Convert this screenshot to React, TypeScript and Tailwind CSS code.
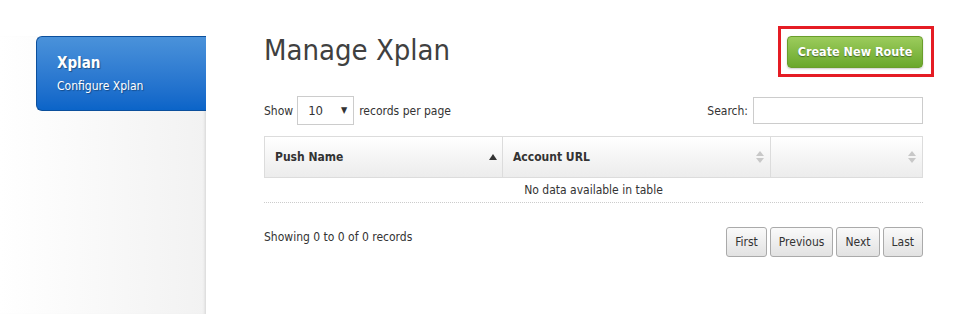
import React from "react";

const font = { fontFamily: '"DejaVu Sans Condensed", "Noto Sans", sans-serif' };

function SortBoth() {
  return (
    <svg width="8" height="12" viewBox="0 0 8 12" className="block">
      <path d="M4 0 L8 5 L0 5 Z" fill="#c8c8c8" />
      <path d="M4 12 L8 7 L0 7 Z" fill="#c8c8c8" />
    </svg>
  );
}

function SortAsc() {
  return (
    <svg width="8" height="6" viewBox="0 0 8 6" className="block">
      <path d="M4 0 L8 6 L0 6 Z" fill="#333" />
    </svg>
  );
}

export default function App() {
  return (
    <div className="flex h-[314px] w-[980px] bg-white text-[12px] text-[#333]" style={font}>
      <aside className="flex w-[206px] flex-col">
        <div className="h-[36px] bg-white" />
        <div className="flex-1 bg-gradient-to-r from-white to-[#f2f2f2] shadow-[inset_-3px_0_3px_-2px_rgba(0,0,0,0.12)]">
          <div className="ml-[36px] h-[75px] rounded-l-[6px] border border-r-0 border-[#0b4f9c] bg-gradient-to-b from-[#4a92da] to-[#0a64c8] pl-[20px] pt-[15px] text-white">
            <div className="text-[15px] font-bold leading-[22px] [text-shadow:1px_1px_1px_rgba(0,0,0,0.35)]">Xplan</div>
            <div className="mt-[4px] text-[12px] leading-[16px] [text-shadow:1px_1px_1px_rgba(0,0,0,0.35)]">Configure Xplan</div>
          </div>
        </div>
      </aside>
      <main className="ml-[58px] w-[659px] pt-[30px]">
        <div className="flex items-start justify-between">
          <h1 className="text-[29px] leading-[40px] text-[#404040]">Manage Xplan</h1>
          <div className="-mr-[11px] -mt-[4px] border-[3px] border-[#e51c24] pb-[6px] pl-[6px] pr-[8px] pt-[7px]">
            <button className="block h-[32px] w-[136px] rounded-[4px] border border-[#6a9e2c] bg-gradient-to-b from-[#9ccc5c] to-[#6aa82a] text-[12.5px] font-bold text-white [text-shadow:0_1px_1px_rgba(0,0,0,0.4)] shadow-[0_1px_2px_rgba(0,0,0,0.2)]">
              Create New Route
            </button>
          </div>
        </div>
        <div className="mt-[19px] flex items-center justify-between">
          <div className="flex items-center">
            <span>Show</span>
            <div className="ml-[4px] flex h-[29px] w-[57px] items-center justify-between border border-[#ccc] pl-[10px] pr-[6px] text-[13px]">
              <span>10</span>
              <span className="text-[9px]">▼</span>
            </div>
            <span className="ml-[5px]">records per page</span>
          </div>
          <div className="flex items-center">
            <span>Search:</span>
            <div className="ml-[5px] h-[27px] w-[170px] border border-[#ccc]" />
          </div>
        </div>
        <div className="mt-[11px] border-b border-dotted border-[#ccc]">
          <div className="flex h-[42px] border border-[#dcdcdc] bg-gradient-to-b from-white to-[#ececec] font-bold">
            <div className="flex w-[238px] items-center justify-between border-r border-[#dcdcdc] pl-[10px] pr-[5px]">
              <span>Push Name</span>
              <SortAsc />
            </div>
            <div className="flex w-[268px] items-center justify-between border-r border-[#dcdcdc] pl-[10px] pr-[6px]">
              <span>Account URL</span>
              <SortBoth />
            </div>
            <div className="flex flex-1 items-center justify-end pr-[6px]">
              <SortBoth />
            </div>
          </div>
          <div className="flex h-[24px] items-center justify-center">No data available in table</div>
        </div>
        <div className="mt-[21px] flex items-start justify-between">
          <span className="mt-[4px]">Showing 0 to 0 of 0 records</span>
          <div className="mt-[3px] flex gap-[3px]">
            {["First", "Previous", "Next", "Last"].map((t) => (
              <button
                key={t}
                className="h-[30px] rounded-[3px] border border-[#aaa] bg-gradient-to-b from-[#fafafa] to-[#e2e2e2] px-[8px] text-[12px] text-[#333]"
              >
                {t}
              </button>
            ))}
          </div>
        </div>
      </main>
    </div>
  );
}
